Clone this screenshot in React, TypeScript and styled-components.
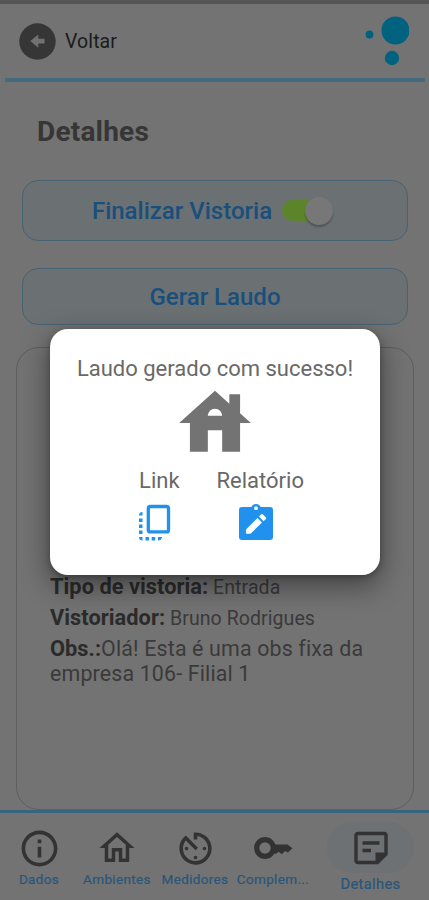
import React from 'react';
import styled, { createGlobalStyle } from 'styled-components';
import { MdAvTimer, MdHouse, MdInfoOutline, MdOutlineHome } from 'react-icons/md';

const GlobalStyle = createGlobalStyle`
  *, *::before, *::after { box-sizing: border-box; }
  body { margin: 0; background: #737373; }
`;

const Screen = styled.div`
  position: relative;
  display: flex;
  flex-direction: column;
  width: 429px;
  height: 900px;
  overflow: hidden;
  background: #737373;
  border-top: 4px solid #555;
  font-family: Roboto, sans-serif;
`;

const Header = styled.header`
  display: flex;
  flex: none;
  align-items: center;
  justify-content: space-between;
  height: 78px;
  margin: 0 4px 0 5px;
  padding: 0 16px 0 14px;
  border-bottom: 4px solid #446a80;
`;

const Back = styled.button`
  display: flex;
  align-items: center;
  gap: 9px;
  padding: 0;
  border: 0;
  background: none;
  color: #1b1b1b;
  font: 400 19.5px Roboto, sans-serif;
  letter-spacing: 0.1px;
`;

const Title = styled.h1`
  flex: none;
  margin: 33px 0 32px 37px;
  color: #363636;
  font-size: 28px;
  font-weight: 700;
  line-height: 33px;
  letter-spacing: 0.2px;
`;

const Action = styled.button<{ $height: number }>`
  display: flex;
  flex: none;
  align-items: center;
  justify-content: center;
  gap: 10px;
  height: ${({ $height }) => $height}px;
  margin: 0 21px 27px 22px;
  padding: 0;
  border: 1.5px solid #456375;
  border-radius: 16px;
  background: #6b7073;
  color: #194f7c;
  font: 500 24px Roboto, sans-serif;
`;

const Toggle = styled.span`
  display: flex;
  align-items: center;
  justify-content: flex-end;
  width: 44px;
  height: 21px;
  margin-right: 12px;
  border-radius: 11px;
  background: linear-gradient(90deg, #5c852b 0 36px, transparent 36px);
`;

const Knob = styled.span`
  flex: none;
  width: 28px;
  height: 28px;
  margin-right: -7px;
  border-radius: 50%;
  background: #777;
  box-shadow: 0 2px 2px #0004;
`;

const Card = styled.section`
  display: flex;
  flex: 1;
  flex-direction: column;
  justify-content: flex-start;
  margin: -5px 15px 0 16px;
  padding: 226px 30px 0 33px;
  border: 1.5px solid #5e5e5e;
  border-radius: 23px;
  color: #3a3a3a;
`;

const Detail = styled.p<{ $size: number }>`
  margin: 0 0 5px;
  font-size: ${({ $size }) => $size}px;
  line-height: 25px;
  letter-spacing: ${({ $size }) => ($size > 20 ? 0.15 : 0.08)}px;
  white-space: nowrap;
`;

const Label = styled.strong`
  color: #2b2b2b;
  font-size: 21.8px;
  font-weight: 700;
  letter-spacing: 0.03px;
`;

const Nav = styled.nav`
  display: grid;
  flex: none;
  grid-template-columns: 78px 78px 78px 78px 1fr;
  height: 90px;
  border-top: 3px solid #386481;
`;

const Tab = styled.a<{ $active?: boolean }>`
  display: flex;
  flex-direction: column;
  align-items: center;
  padding-top: ${({ $active }) => ($active ? 9 : 14)}px;
  color: #333;
`;

const TabLabel = styled.span<{ $active?: boolean }>`
  margin-top: ${({ $active }) => ($active ? 2 : 1)}px;
  color: #28567b;
  font-size: ${({ $active }) => ($active ? 14.7 : 13.5)}px;
  font-weight: 400;
  line-height: 18px;
  letter-spacing: 0.35px;
  -webkit-text-stroke: 0.2px #28567b;
`;

const TabIcon = styled.span<{ $active?: boolean }>`
  display: flex;
  align-items: center;
  justify-content: center;
  width: ${({ $active }) => ($active ? 87 : 50)}px;
  height: ${({ $active }) => ($active ? 51 : 42)}px;
  border-radius: 26px;
  background: ${({ $active }) => ($active ? '#6d7173' : 'transparent')};
`;

const Dialog = styled.div`
  position: absolute;
  top: 325px;
  left: 50px;
  display: flex;
  flex-direction: column;
  align-items: center;
  width: 330px;
  height: 246px;
  padding-top: 26px;
  border-radius: 18px;
  background: #fff;
  box-shadow: 0 10px 28px 2px #0006, 0 2px 6px #0004;
  color: #696969;
`;

const Message = styled.div`
  font-size: 22px;
  line-height: 28px;
  white-space: nowrap;
`;

const HouseIcon = styled(MdHouse)`
  flex: none;
  margin-top: -3px;
  color: #737373;
`;

const Options = styled.div`
  display: flex;
  gap: 37px;
  margin-top: 1px;
  padding-left: 13px;
`;

const Option = styled.button`
  display: flex;
  flex-direction: column;
  align-items: center;
  padding: 0;
  border: 0;
  background: none;
  color: #686868;
  font: 400 22px/28px Roboto, sans-serif;
  letter-spacing: 0;

  svg { margin: 7px 8px 0 0; color: #2092ee; }
`;

const BackIcon = () => (
  <svg width="37" height="37" viewBox="0 0 37 37">
    <circle cx="18.5" cy="18.5" r="18.2" fill="#363636" />
    <path d="M25.5 15.8v4.6h-6.2v4.3L11.3 18l8-6.6v4.4z" fill="#717171" />
  </svg>
);

const BrandMark = () => (
  <svg width="44" height="52" viewBox="0 0 44 52">
    <circle cx="4.5" cy="19.5" r="3.9" fill="#00627f" />
    <circle cx="30.5" cy="15.5" r="14" fill="#00627f" />
    <circle cx="27" cy="43" r="7.2" fill="#00627f" />
  </svg>
);

const LinkIcon = () => (
  <svg width="32" height="40" viewBox="0 0 32 40">
    <rect x="9.3" y="4.5" width="20.2" height="25.4" rx="2" fill="none" stroke="currentColor" strokeWidth="3.3" />
    <path
      d="M0 13.5q0-3.3 3.5-3.5v3.5zM0 16.5h3.5V20H0zM0 22.5h3.500V26H0zM0 28.500h3.500V32H0zM0 35h3.500v3.500Q0 38.500 0 35zM6.500 35H10v3.500H6.500zM12.700 35h3.500v3.500h-3.500zM19 35h4q-.5 3.500-4 3.500z"
      fill="currentColor"
    />
  </svg>
);

const ReportIcon = () => (
  <svg width="40" height="40" viewBox="0 0 40 40">
    <path
      fill="currentColor"
      fillRule="evenodd"
      d="M6 5h9.3a5.1 5.1 0 0 1 9.4 0H34a3 3 0 0 1 3 3v27a3 3 0 0 1-3 3H6a3 3 0 0 1-3-3V8a3 3 0 0 1 3-3Zm14-.7a1.900 1.900 0 1 0 0 3.800 1.900 1.900 0 0 0 0-3.800Z"
    />
    <path fill="#fff" d="M10 27.500 21.500 16l4.500 4.500-11.500 11.300H10zM23 14.500l2-2q1-1 2 0l2.700 2.700q1 1 0 2l-2.200 2z" />
  </svg>
);

const KeyIcon = () => (
  <svg width="41" height="26" viewBox="0 0 41 26">
    <circle cx="12" cy="13" r="8.300" fill="none" stroke="currentColor" strokeWidth="5.200" />
    <path d="M20 9.500h14.500l5 3.800-4.500 4.300-3-1.500-3 3.200-3.500-2.600-3 2.600L20 17z" fill="currentColor" />
  </svg>
);

const NoteIcon = () => (
  <svg width="34" height="34" viewBox="0 0 34 34">
    <path
      d="M4 2.500h26q2 0 2 2V23l-8.500 8.500H4q-2 0-2-2v-25q0-2 2-2Z"
      fill="none"
      stroke="currentColor"
      strokeWidth="3.400"
      strokeLinejoin="round"
    />
    <path d="M21.500 32V21.500h10.500z" fill="currentColor" />
    <path d="M8.500 12h17M8.500 19.500h8.500" stroke="currentColor" strokeWidth="3.300" />
  </svg>
);

export default function App() {
  return (
    <>
      <GlobalStyle />
      <Screen>
        <Header>
          <Back><BackIcon />Voltar</Back>
          <BrandMark />
        </Header>
        <Title>Detalhes</Title>
        <Action $height={61}>
          Finalizar Vistoria
          <Toggle><Knob /></Toggle>
        </Action>
        <Action $height={57}>Gerar Laudo</Action>
        <Card>
          <Detail $size={19.5}><Label>Tipo de vistoria:</Label> Entrada</Detail>
          <Detail $size={19.5}><Label>Vistoriador:</Label> Bruno Rodrigues</Detail>
          <Detail $size={21.4}><Label>Obs.:</Label>Olá! Esta é uma obs fixa da<br />empresa 106- Filial 1</Detail>
        </Card>
        <Nav>
          <Tab><TabIcon><MdInfoOutline size={43} /></TabIcon><TabLabel>Dados</TabLabel></Tab>
          <Tab><TabIcon><MdOutlineHome size={42} /></TabIcon><TabLabel>Ambientes</TabLabel></Tab>
          <Tab><TabIcon><MdAvTimer size={43} /></TabIcon><TabLabel>Medidores</TabLabel></Tab>
          <Tab><TabIcon><KeyIcon /></TabIcon><TabLabel>Complem...</TabLabel></Tab>
          <Tab $active><TabIcon $active><NoteIcon /></TabIcon><TabLabel $active>Detalhes</TabLabel></Tab>
        </Nav>
        <Dialog role="dialog">
          <Message>Laudo gerado com sucesso!</Message>
          <HouseIcon size={86} />
          <Options>
            <Option>Link<LinkIcon /></Option>
            <Option>Relatório<ReportIcon /></Option>
          </Options>
        </Dialog>
      </Screen>
    </>
  );
}
